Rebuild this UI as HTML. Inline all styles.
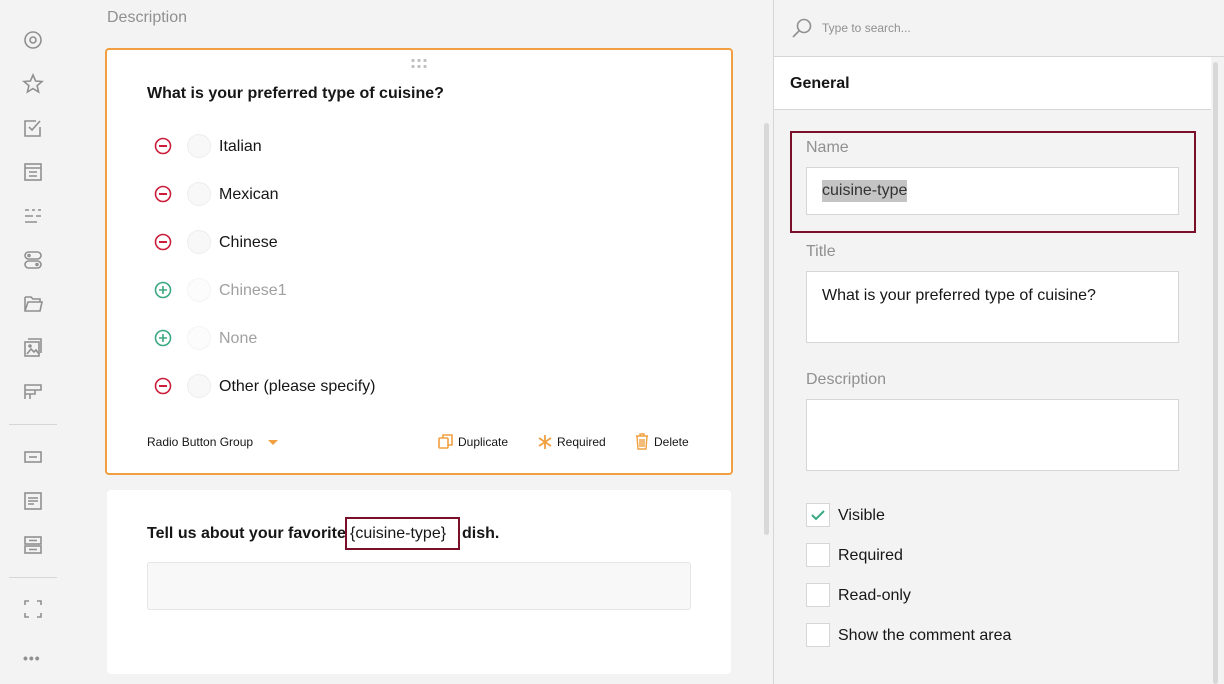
<!DOCTYPE html>
<html><head><meta charset="utf-8"><style>
*{box-sizing:border-box;margin:0;padding:0}
body{width:1224px;height:684px;overflow:hidden;background:#f3f3f3;font-family:"Liberation Sans",sans-serif;position:relative;color:#161616}
.a{position:absolute}
.ic{position:absolute;left:22px;width:22px;height:22px}
.ic svg{width:22px;height:22px;fill:none;stroke:#909090;stroke-width:1.6}
.card{position:absolute;background:#fff;border-radius:4px}
.row{position:absolute;left:153px;height:24px;font-size:16px;line-height:24px}
.rd{position:absolute;left:34px;top:0;width:24px;height:24px;border-radius:50%;background:#f8f8f8;border:1px solid #eee}
.row span{position:absolute;left:66px;top:1px;white-space:nowrap}
.lbl{position:absolute;left:806px;font-size:16px;color:#909090}
.inp{position:absolute;left:806px;width:373px;background:#fff;border:1px solid #d6d6d6}
.cb{position:absolute;left:806px;width:24px;height:24px;background:#fff;border:1px solid #d6d6d6}
.cbl{position:absolute;left:838px;font-size:16px;line-height:24px}
</style></head><body>
<div class="ic" style="top:29px"><svg viewBox="0 0 22 22"><circle cx="11" cy="11" r="8"/><circle cx="11" cy="11" r="3"/></svg></div>
<div class="ic" style="top:73px"><svg viewBox="0 0 22 22"><path d="M11 2l2.6 6 6.4.5-4.9 4.2 1.5 6.3L11 15.6 5.4 19l1.5-6.3L2 8.5 8.4 8z"/></svg></div>
<div class="ic" style="top:117px"><svg viewBox="0 0 22 22"><path d="M18 10v9H3V4h11"/><path d="M7 10l3 3 8-9"/></svg></div>
<div class="ic" style="top:161px"><svg viewBox="0 0 22 22"><rect x="3" y="3" width="16" height="16"/><path d="M3 7h16M7 11h8M7 15h8"/></svg></div>
<div class="ic" style="top:205px"><svg viewBox="0 0 22 22"><path d="M3 5h4M10 5h3M16 5h3M3 11h8M14 11h5M3 17h12"/></svg></div>
<div class="ic" style="top:249px"><svg viewBox="0 0 22 22"><rect x="3" y="3" width="16" height="7" rx="3.5"/><rect x="3" y="12" width="16" height="7" rx="3.5"/><circle cx="7" cy="6.5" r="1"/><circle cx="15" cy="15.5" r="1"/></svg></div>
<div class="ic" style="top:293px"><svg viewBox="0 0 22 22"><path d="M3 4h6l2 2h7v3M3 4v14h15l2-9H6L3 18"/></svg></div>
<div class="ic" style="top:337px"><svg viewBox="0 0 22 22"><rect x="3" y="5" width="14" height="14"/><path d="M6 2h13v14M5 17l4-5 3 3 2-2 3 4"/><circle cx="8" cy="9" r="1"/></svg></div>
<div class="ic" style="top:381px"><svg viewBox="0 0 22 22"><path d="M3 4h16v5H3zM3 9v9M3 13h10v-4M8 13v5"/></svg></div>
<div class="a" style="left:9px;top:424px;width:48px;height:1px;background:#d6d6d6"></div>
<div class="ic" style="top:446px"><svg viewBox="0 0 22 22"><rect x="3" y="6" width="16" height="10"/><path d="M7 11h8"/></svg></div>
<div class="ic" style="top:490px"><svg viewBox="0 0 22 22"><rect x="3" y="3" width="16" height="16"/><path d="M6 8h10M6 11h10M6 14h6"/></svg></div>
<div class="ic" style="top:534px"><svg viewBox="0 0 22 22"><rect x="3" y="3" width="16" height="7"/><rect x="3" y="12" width="16" height="7"/><path d="M7 6.5h8M7 15.5h8"/></svg></div>
<div class="a" style="left:9px;top:577px;width:48px;height:1px;background:#d6d6d6"></div>
<div class="ic" style="top:598px"><svg viewBox="0 0 22 22"><path d="M3 7V3h4M15 3h4v4M19 15v4h-4M7 19H3v-4"/></svg></div>
<div class="a" style="left:23px;top:650px;font-size:14px;color:#909090;letter-spacing:1px;font-weight:bold">•••</div>

<div class="a" style="left:107px;top:9px;font-size:16px;color:#909090">Description</div>
<div class="card" style="left:105px;top:48px;width:628px;height:427px;border:2px solid #f0a040"></div>
<svg class="a" style="left:410px;top:58px" width="18" height="11" viewBox="0 0 18 11" fill="#c0c0c0"><circle cx="3" cy="2.5" r="1.6"/><circle cx="9" cy="2.5" r="1.6"/><circle cx="15" cy="2.5" r="1.6"/><circle cx="3" cy="8.5" r="1.6"/><circle cx="9" cy="8.5" r="1.6"/><circle cx="15" cy="8.5" r="1.6"/></svg>
<div class="a" style="left:147px;top:85px;font-size:16px;font-weight:bold;color:#161616">What is your preferred type of cuisine?</div>
<div class="row" style="top:134px"><svg class="a" style="left:1px;top:3px" width="18" height="18" viewBox="0 0 18 18"><circle cx="9" cy="9" r="7.5" fill="none" stroke="#cd1c3a" stroke-width="1.6"/><path d="M5 9h8" stroke="#cd1c3a" stroke-width="2"/></svg><div class="rd"></div><span>Italian</span></div>
<div class="row" style="top:182px"><svg class="a" style="left:1px;top:3px" width="18" height="18" viewBox="0 0 18 18"><circle cx="9" cy="9" r="7.5" fill="none" stroke="#cd1c3a" stroke-width="1.6"/><path d="M5 9h8" stroke="#cd1c3a" stroke-width="2"/></svg><div class="rd"></div><span>Mexican</span></div>
<div class="row" style="top:230px"><svg class="a" style="left:1px;top:3px" width="18" height="18" viewBox="0 0 18 18"><circle cx="9" cy="9" r="7.5" fill="none" stroke="#cd1c3a" stroke-width="1.6"/><path d="M5 9h8" stroke="#cd1c3a" stroke-width="2"/></svg><div class="rd"></div><span>Chinese</span></div>
<div class="row" style="top:278px"><svg class="a" style="left:1px;top:3px" width="18" height="18" viewBox="0 0 18 18"><circle cx="9" cy="9" r="7.5" fill="none" stroke="#3aa981" stroke-width="1.6"/><path d="M5 9h8M9 5v8" stroke="#3aa981" stroke-width="1.6"/></svg><div class="rd" style="background:#fcfcfc;border-color:#f4f4f4"></div><span style="color:#a0a0a0">Chinese1</span></div>
<div class="row" style="top:326px"><svg class="a" style="left:1px;top:3px" width="18" height="18" viewBox="0 0 18 18"><circle cx="9" cy="9" r="7.5" fill="none" stroke="#3aa981" stroke-width="1.6"/><path d="M5 9h8M9 5v8" stroke="#3aa981" stroke-width="1.6"/></svg><div class="rd" style="background:#fcfcfc;border-color:#f4f4f4"></div><span style="color:#a0a0a0">None</span></div>
<div class="row" style="top:374px"><svg class="a" style="left:1px;top:3px" width="18" height="18" viewBox="0 0 18 18"><circle cx="9" cy="9" r="7.5" fill="none" stroke="#cd1c3a" stroke-width="1.6"/><path d="M5 9h8" stroke="#cd1c3a" stroke-width="2"/></svg><div class="rd"></div><span>Other (please specify)</span></div>
<div class="a" style="left:147px;top:435px;font-size:12px">Radio Button Group</div>
<div class="a" style="left:268px;top:440px;width:0;height:0;border-left:5px solid transparent;border-right:5px solid transparent;border-top:5px solid #f0a040"></div>
<svg class="a" style="left:438px;top:433px" width="16" height="17" viewBox="0 0 16 17" fill="none" stroke="#f0a040" stroke-width="1.6"><rect x="1" y="5" width="9" height="10" rx="1"/><path d="M5 5V2h9v10h-4"/></svg>
<div class="a" style="left:458px;top:435px;font-size:12px">Duplicate</div>
<svg class="a" style="left:537px;top:434px" width="16" height="16" viewBox="0 0 16 16" stroke="#f0a040" stroke-width="1.8"><path d="M8 1v14M2 4l12 8M14 4L2 12"/></svg>
<div class="a" style="left:557px;top:435px;font-size:12px">Required</div>
<svg class="a" style="left:635px;top:433px" width="14" height="17" viewBox="0 0 14 17" fill="none" stroke="#f0a040" stroke-width="1.4"><path d="M1 3h12M5 3V1h4v2M2 3l1 13h8l1-13M5 6v8M7 6v8M9 6v8"/></svg>
<div class="a" style="left:654px;top:435px;font-size:12px">Delete</div>
<div class="card" style="left:107px;top:490px;width:624px;height:184px"></div>
<div class="a" style="left:147px;top:525px;font-size:16px;font-weight:bold;white-space:nowrap">Tell us about your favorite</div>
<div class="a" style="left:345px;top:517px;width:115px;height:33px;border:2px solid #7a0f2a"></div>
<div class="a" style="left:350px;top:525px;font-size:16px;white-space:nowrap">{cuisine-type}</div>
<div class="a" style="left:462px;top:525px;font-size:16px;font-weight:bold">dish.</div>
<div class="a" style="left:147px;top:562px;width:544px;height:48px;background:#f8f8f8;border:1px solid #e6e6e6;border-radius:3px"></div>
<div class="a" style="left:764px;top:123px;width:5px;height:412px;background:#d8d8d8;border-radius:3px"></div>
<div class="a" style="left:773px;top:0;width:1px;height:684px;background:#d6d6d6"></div>
<div class="a" style="left:774px;top:56px;width:450px;height:1px;background:#d6d6d6"></div>
<svg class="a" style="left:791px;top:17px" width="22" height="22" viewBox="0 0 22 22" fill="none" stroke="#909090" stroke-width="1.6"><circle cx="13" cy="9" r="6.5"/><path d="M8.5 13.5L2 20"/></svg>
<div class="a" style="left:822px;top:21px;font-size:12px;color:#909090">Type to search...</div>
<div class="a" style="left:774px;top:57px;width:437px;height:53px;background:#fff;border-bottom:1px solid #d6d6d6"></div>
<div class="a" style="left:790px;top:75px;font-size:16px;font-weight:bold">General</div>
<div class="a" style="left:1213px;top:62px;width:5px;height:622px;background:#d8d8d8;border-radius:3px"></div>
<div class="a" style="left:790px;top:131px;width:406px;height:102px;border:2px solid #7a0f2a"></div>
<div class="lbl" style="top:139px">Name</div>
<div class="inp" style="top:167px;height:48px"></div>
<div class="a" style="left:822px;top:180px;font-size:16px;background:#c4c4c4;color:#333;line-height:22px">cuisine-type</div>
<div class="lbl" style="top:243px">Title</div>
<div class="inp" style="top:271px;height:72px"></div>
<div class="a" style="left:822px;top:287px;font-size:16px">What is your preferred type of cuisine?</div>
<div class="lbl" style="top:371px">Description</div>
<div class="inp" style="top:399px;height:72px"></div>
<div class="cb" style="top:503px"><svg width="22" height="22" viewBox="0 0 22 22" fill="none" stroke="#3aa981" stroke-width="2"><path d="M5 11l4 4 8-8"/></svg></div>
<div class="cbl" style="top:504px">Visible</div>
<div class="cb" style="top:543px"></div><div class="cbl" style="top:544px">Required</div>
<div class="cb" style="top:583px"></div><div class="cbl" style="top:584px">Read-only</div>
<div class="cb" style="top:623px"></div><div class="cbl" style="top:624px">Show the comment area</div>
</body></html>
